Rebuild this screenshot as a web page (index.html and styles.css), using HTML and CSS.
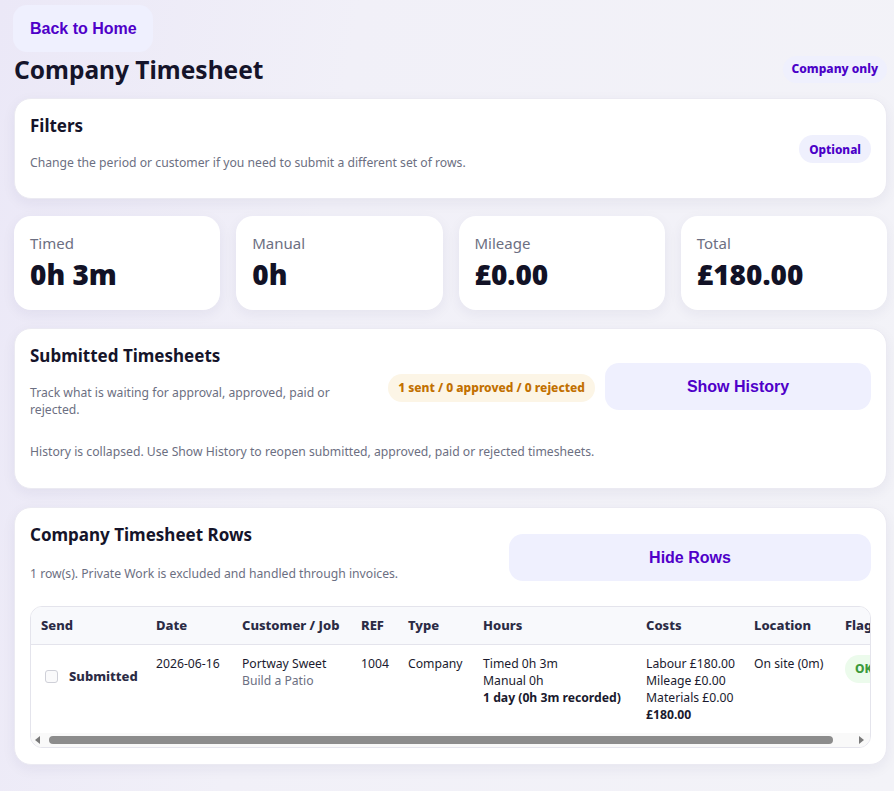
FILE: index.html
```html
<!DOCTYPE html>
<html lang="en">
<head>
<meta charset="utf-8">
<title>Company Timesheet</title>
<link rel="stylesheet" href="styles.css">
</head>
<body>
<div class="page">
  <button class="btn btn-back">Back to Home</button>
  <header class="topbar">
    <h1>Company Timesheet</h1>
    <span class="badge badge-purple badge-sm">Company only</span>
  </header>

  <section class="card card-filters">
    <div class="card-text">
      <h2>Filters</h2>
      <p class="muted desc">Change the period or customer if you need to submit a different set of rows.</p>
    </div>
    <span class="badge badge-purple badge-opt">Optional</span>
  </section>

  <div class="stats">
    <div class="stat"><div class="stat-label">Timed</div><div class="stat-value">0h 3m</div></div>
    <div class="stat"><div class="stat-label">Manual</div><div class="stat-value">0h</div></div>
    <div class="stat"><div class="stat-label">Mileage</div><div class="stat-value">£0.00</div></div>
    <div class="stat"><div class="stat-label">Total</div><div class="stat-value">£180.00</div></div>
  </div>

  <section class="card card-submitted">
    <div class="card-row">
      <div class="card-text text-narrow">
        <h2>Submitted Timesheets</h2>
        <p class="muted desc">Track what is waiting for approval, approved, paid or rejected.</p>
      </div>
      <span class="badge badge-amber">1 sent / 0 approved / 0 rejected</span>
      <button class="btn btn-history">Show History</button>
    </div>
    <p class="muted note">History is collapsed. Use Show History to reopen submitted, approved, paid or rejected timesheets.</p>
  </section>

  <section class="card card-rows">
    <div class="card-row">
      <div class="card-text">
        <h2>Company Timesheet Rows</h2>
        <p class="muted desc">1 row(s). Private Work is excluded and handled through invoices.</p>
      </div>
      <button class="btn btn-rows">Hide Rows</button>
    </div>
    <div class="table-wrap">
      <div class="table-clip">
        <table>
          <colgroup>
            <col class="c-send"><col class="c-date"><col class="c-cust"><col class="c-ref"><col class="c-type"><col class="c-hours"><col class="c-costs"><col class="c-loc"><col class="c-flag">
          </colgroup>
          <thead>
            <tr><th>Send</th><th>Date</th><th>Customer / Job</th><th>REF</th><th>Type</th><th>Hours</th><th>Costs</th><th>Location</th><th>Flags</th></tr>
          </thead>
          <tbody>
            <tr>
              <td><label class="send"><input type="checkbox" class="check" disabled><span>Submitted</span></label></td>
              <td>2026-06-16</td>
              <td>Portway Sweet<br><span class="muted">Build a Patio</span></td>
              <td>1004</td>
              <td>Company</td>
              <td>Timed 0h 3m<br>Manual 0h<br><strong>1 day (0h 3m recorded)</strong></td>
              <td>Labour £180.00<br>Mileage £0.00<br>Materials £0.00<br><strong>£180.00</strong></td>
              <td>On site (0m)</td>
              <td><span class="badge badge-green">OK</span></td>
            </tr>
          </tbody>
        </table>
      </div>
      <div class="scrollbar">
        <span class="arrow arrow-left"></span>
        <span class="thumb"></span>
        <span class="arrow arrow-right"></span>
      </div>
    </div>
  </section>
</div>
</body>
</html>
```

FILE: styles.css
```css
* { box-sizing: border-box; }

html, body { height: 100%; }

body {
  margin: 0;
  font-family: "Noto Sans", "Open Sans", sans-serif;
  color: #15152b;
  background: linear-gradient(100deg, #ebe8f7 0%, #f1f0f8 35%, #f3f3f8 100%);
}

.page {
  padding: 5px 7px 24px 14px;
}

.btn {
  border: 0;
  background: #eff0fe;
  color: #4f00c9;
  font-family: "Liberation Sans", Arial, sans-serif;
  font-weight: 700;
  font-size: 16px;
  border-radius: 14px;
  height: 47px;
  cursor: pointer;
  white-space: nowrap;
}

.btn-back {
  display: block;
  margin-left: -1px;
  padding: 0 16px 0 17px;
}

.topbar {
  display: flex;
  justify-content: space-between;
  align-items: center;
  margin-top: 2px;
}

h1 {
  margin: 0;
  font-size: 24.5px;
  line-height: 31px;
  font-weight: 700;
  color: #15142a;
}

h2 {
  margin: 0;
  font-size: 17px;
  line-height: 22px;
  font-weight: 700;
  color: #15142a;
}

.muted { color: #6c6f82; }

.badge {
  display: inline-block;
  border-radius: 999px;
  font-weight: 800;
  white-space: nowrap;
}

.badge-purple {
  background: #eff0fd;
  color: #4b00c8;
  font-size: 12px;
  line-height: 18px;
  padding: 5px 10px;
}

.badge-sm {
  padding: 4px 9px 5px;
}

.badge-opt {
  font-size: 11.8px;
}

.badge-amber {
  background: #fcf5e6;
  color: #c27000;
  font-size: 12px;
  line-height: 18px;
  padding: 5px 10px;
}

.badge-green {
  background: #ecfbec;
  color: #3c9a3c;
  font-size: 12px;
  line-height: 18px;
  padding: 5px 10px;
}

.card {
  background: #fff;
  border: 1px solid #ebeaf2;
  border-radius: 17px;
  box-shadow: 0 4px 14px rgba(40, 30, 90, 0.06);
  padding: 14px 15px 16px;
  margin-top: 18px;
}

.topbar + .card { margin-top: 13px; }

.desc {
  margin: 16px 0 0;
  font-size: 12.2px;
  line-height: 17px;
}

.card-filters {
  display: flex;
  justify-content: space-between;
  align-items: center;
  padding-top: 16px;
  padding-bottom: 27px;
}

.card-filters .desc { margin-top: 17px; }

.card-filters .badge { margin-top: 12px; }

.card-row {
  display: flex;
  align-items: flex-start;
  gap: 10px;
}

.card-text { flex: 1 1 auto; min-width: 0; }

.card-submitted { padding-top: 16px; padding-bottom: 26px; }

.card-submitted .desc { margin-top: 17px; }

.card-submitted .badge { margin-top: 29px; }

.text-narrow .desc { max-width: 330px; }

.btn-history { width: 266px; flex: none; margin-top: 18px; }

.btn-rows { width: 362px; flex: none; margin-top: 10px; }

.note {
  margin: 24px 0 0;
  font-size: 12.2px;
  line-height: 20px;
}

.stats {
  display: grid;
  grid-template-columns: repeat(4, 1fr);
  gap: 16px;
  margin-top: 17px;
}

.stat {
  background: #fff;
  border-radius: 17px;
  box-shadow: 0 4px 14px rgba(40, 30, 90, 0.06);
  height: 94px;
  padding: 16px 16px 0;
}

.stat-label {
  font-size: 15px;
  line-height: 22px;
  color: #6c6f82;
}

.stat-value {
  margin-top: 3px;
  font-size: 28px;
  line-height: 34px;
  font-weight: 900;
  color: #121226;
}

.card-rows { padding-top: 16px; padding-bottom: 16px; }

.card-rows .desc { margin-top: 19px; }

.table-wrap {
  margin-top: 24px;
  border: 1px solid #e4e4ec;
  border-radius: 12px;
  overflow: hidden;
}

.table-clip { overflow: hidden; }

table {
  table-layout: fixed;
  width: 875px;
  border-collapse: collapse;
  font-size: 12.2px;
  line-height: 17px;
  color: #1a1a2e;
}

.c-send { width: 115px; }
.c-date { width: 86px; }
.c-cust { width: 119px; }
.c-ref { width: 47px; }
.c-type { width: 75px; }
.c-hours { width: 163px; }
.c-costs { width: 108px; }
.c-loc { width: 91px; }
.c-flag { width: 71px; }

th {
  text-align: left;
  background: #f8f9fc;
  color: #2b2b45;
  font-weight: 800;
  font-size: 13px;
  padding: 10px 10px;
  border-bottom: 1px solid #e4e4ec;
  white-space: nowrap;
}

td {
  vertical-align: top;
  padding: 10px 10px;
  white-space: nowrap;
}

td strong { font-weight: 700; }

.send {
  display: flex;
  align-items: center;
  gap: 11px;
  padding-top: 13px;
  padding-left: 4px;
  font-weight: 800;
  font-size: 13px;
  color: #2b2b45;
}

.check {
  appearance: none;
  flex: none;
  margin: 0;
  width: 13px;
  height: 13px;
  border: 1px solid #cfd0d8;
  border-radius: 3px;
  background: #fafafb;
}

.scrollbar {
  display: flex;
  align-items: center;
  height: 14px;
  background: #f9f9f9;
  padding: 0 6px 0 4px;
}

.thumb {
  flex: 1;
  height: 8px;
  margin: 0 26px 0 9px;
  border-radius: 4px;
  background: #8c8c8c;
}

.arrow {
  width: 0;
  height: 0;
  border-top: 4px solid transparent;
  border-bottom: 4px solid transparent;
}

.arrow-left { border-right: 5px solid #7a7a7a; }
.arrow-right { border-left: 5px solid #7a7a7a; }
```
